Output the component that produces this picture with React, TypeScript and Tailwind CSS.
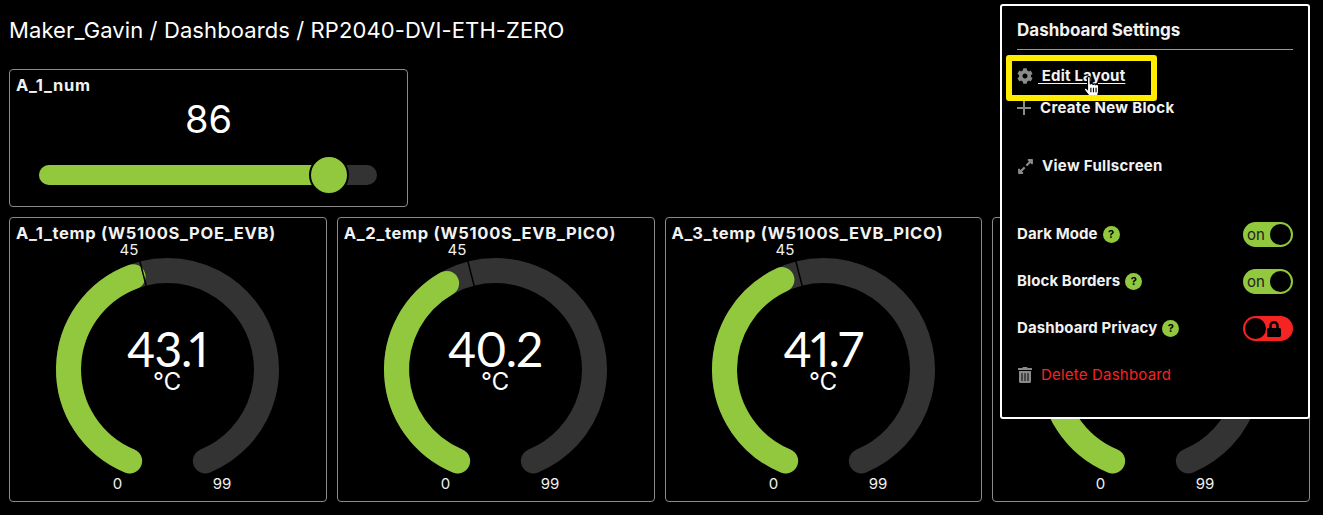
import React from "react";
import { FaCog, FaExpandAlt, FaLock, FaTrashAlt } from "react-icons/fa";

const GREEN = "#92c83e";
const TRACK = "#333333";

const polar = (deg: number, r: number) => {
  const a = ((deg - 90) * Math.PI) / 180;
  return [157.5 + r * Math.cos(a), 151.5 + r * Math.sin(a)];
};

const arc = (from: number, to: number, r: number) => {
  const [x1, y1] = polar(from, r);
  const [x2, y2] = polar(to, r);
  const large = to - from > 180 ? 1 : 0;
  return `M ${x1} ${y1} A ${r} ${r} 0 ${large} 1 ${x2} ${y2}`;
};

const START = 202.5;
const SWEEP = 315;
const angle = (v: number) => START + (v / 99) * SWEEP;

// the 4th block sits under the settings menu, so it has no title or readout
const Gauge = ({ title, value }: { title?: string; value: number }) => {
  const tick = angle(45);
  const [tx1, ty1] = polar(tick, 86);
  const [tx2, ty2] = polar(tick, 113);
  return (
    <div className="relative h-[285px] rounded border border-[#8a8a8a] bg-black">
      {title && (
        <h3 className="pl-[6px] pt-[4px] text-[16.5px] leading-[22px] font-bold tracking-[0.7px] whitespace-nowrap text-[#f2f2f2]">{title}</h3>
      )}
      <svg className="absolute top-0 left-0" width="317" height="283" viewBox="0 0 317 283">
        <path d={arc(START, START + SWEEP, 99)} fill="none" stroke={TRACK} strokeWidth="25" strokeLinecap="round" />
        <path d={arc(START, angle(value), 99)} fill="none" stroke={GREEN} strokeWidth="25" strokeLinecap="round" />
        <line x1={tx1} y1={ty1} x2={tx2} y2={ty2} stroke="#000" strokeWidth="1.5" />
        {title && (
          <>
            <text x="119" y="37" textAnchor="middle" fontSize="15" fill="#f2f2f2">45</text>
            <text x="157" y="149" textAnchor="middle" fontSize="48" letterSpacing="-1" className="font-['Lato'] proportional-nums" fill="#fff">{value.toFixed(1)}</text>
            <text x="157" y="172" textAnchor="middle" fontSize="24" fill="#fff">℃</text>
          </>
        )}
        <text x="107.5" y="271" textAnchor="middle" fontSize="15" fill="#f2f2f2">0</text>
        <text x="212" y="271" textAnchor="middle" fontSize="15" fill="#f2f2f2">99</text>
      </svg>
    </div>
  );
};

const Help = () => (
  <span className="ml-[5px] flex h-[17px] w-[17px] items-center justify-center rounded-full bg-[#92c83e] text-[11px] font-bold tracking-normal text-black">?</span>
);

const Toggle = ({ on }: { on?: boolean }) =>
  on ? (
    <div className="flex h-[25px] w-[50px] items-center justify-between rounded-full bg-[#92c83e] pr-[2px] pl-[4px]">
      <span className="text-[15px] leading-none text-[#222]">on</span>
      <span className="h-[21px] w-[21px] rounded-full bg-black" />
    </div>
  ) : (
    <div className="flex h-[25px] w-[50px] items-center justify-between rounded-full bg-[#f62323] pr-[11px] pl-[2px]">
      <span className="h-[21px] w-[21px] rounded-full bg-black" />
      <FaLock className="text-[16px] text-black" />
    </div>
  );

const SettingRow = ({ label, on, className }: { label: string; on?: boolean; className: string }) => (
  <div className={`flex items-center justify-between ${className}`}>
    <div className="flex items-center text-[15px] font-bold tracking-[0.1px] text-[#f2f2f2]">
      {label}
      <Help />
    </div>
    <Toggle on={on} />
  </div>
);

const SettingsMenu = () => (
  <div className="absolute top-[4px] left-[1000px] h-[415px] w-[310px] rounded-[3px] border-2 border-white bg-black px-[15px] pt-[14px]">
    <h2 className="border-b border-[#999] pb-[8px] text-[17px] leading-[21px] font-bold text-[#f2f2f2]">Dashboard Settings</h2>
    <div className="relative mt-[16px] flex h-[20px] items-center text-[15px] font-bold tracking-[0.2px] text-[#f2f2f2]">
      <FaCog className="text-[16px] text-[#8a8a8a]" />
      <span className="ml-[5px] underline underline-offset-2">&nbsp;Edit Layout</span>
      <svg className="absolute top-[9px] left-[66px]" width="18" height="23" viewBox="0 0 16 20">
        <path d="M4 2.200C4 .6 6.400 .6 6.400 2.200L6.400 8C6.800 7 8.800 7 8.800 8.400C9.200 7.400 11.200 7.400 11.200 8.800C11.600 7.800 13.800 8 13.800 9.600L13.800 14C13.800 16 13 17 13 19L5.500 19C5 17 3 15.500 1.500 13.500C.6 12 2.200 10.800 3.200 11.800L4 12.600Z" fill="#fff" stroke="#000" strokeWidth="1" />
        <path d="M7 11v4M9.300 11v4M11.600 11v4" stroke="#000" strokeWidth="1" />
      </svg>
      {/* highlight box drawn over the screenshot */}
      <div className="absolute top-[-11px] left-[-11px] h-[46px] w-[151px] rounded-[3px] border-[6px] border-[#ffec00]" />
    </div>
    <div className="mt-[12px] flex h-[20px] items-center text-[15px] font-bold tracking-[0.3px] text-[#f2f2f2]">
      <svg className="mr-[9px] shrink-0" width="14" height="14" viewBox="0 0 14 14">
        <path d="M7 0v14M0 7h14" stroke="#8a8a8a" strokeWidth="2" />
      </svg>
      {"Create New Block"}
    </div>
    <div className="mt-[38px] flex h-[20px] items-center text-[15px] font-bold tracking-[0.3px] text-[#f2f2f2]">
      <FaExpandAlt className="mr-[8px] shrink-0 text-[17px] text-[#8a8a8a]" />
      {"View Fullscreen"}
    </div>
    <SettingRow label="Dark Mode" on className="mt-[46px]" />
    <SettingRow label="Block Borders" on className="mt-[22px]" />
    <SettingRow label="Dashboard Privacy" className="mt-[22px]" />
    <div className="mt-[24px] flex h-[20px] items-center text-[15px] tracking-[0.2px] text-[#f62323]">
      <FaTrashAlt className="mr-[8px] shrink-0 text-[16px] text-[#8a8a8a]" />
      {"Delete Dashboard"}
    </div>
  </div>
);

export default function App() {
  return (
    <div className="relative h-[515px] w-[1323px] overflow-hidden bg-black pr-[13px] pl-[9px] font-['Inter','Liberation_Sans',sans-serif] text-white">
      <h1 className="pt-[17px] text-[22px] leading-[27px] tracking-[0.1px] whitespace-nowrap">Maker_Gavin / Dashboards / RP2040-DVI-ETH-ZERO</h1>
      <div className="mt-[25px] flex h-[138px] w-[399px] flex-col rounded border border-[#8a8a8a] px-[6px] pt-[4px]">
        <h3 className="text-[16.5px] leading-[22px] font-bold tracking-[0.7px] text-[#f2f2f2]">A_1_num</h3>
        <div className="text-center text-[38px] leading-[46px]">86</div>
        <div className="relative mr-[24px] ml-[23px] mt-[23px] h-[20px] rounded-full bg-[#333]">
          <div className="h-full w-[289px] rounded-full bg-[#92c83e]" />
          <div className="absolute top-[-10px] left-[270px] h-[40px] w-[40px] rounded-full border-2 border-black bg-[#92c83e]" />
        </div>
      </div>
      <div className="mt-[10px] grid grid-cols-4 gap-[10px]">
        <Gauge title="A_1_temp (W5100S_POE_EVB)" value={43.1} />
        <Gauge title="A_2_temp (W5100S_EVB_PICO)" value={40.2} />
        <Gauge title="A_3_temp (W5100S_EVB_PICO)" value={41.7} />
        <Gauge value={43.1} />
      </div>
      <SettingsMenu />
    </div>
  );
}
